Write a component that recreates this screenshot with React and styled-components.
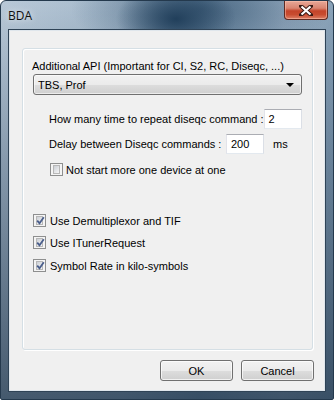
import React from "react";
import styled, { createGlobalStyle } from "styled-components";

const GlobalStyle = createGlobalStyle`
  html, body {
    margin: 0;
    padding: 0;
    background: #ffffff;
  }
  body {
    font-family: "Liberation Sans", Arial, sans-serif;
    font-size: 11px;
    color: #000;
  }
`;

const Window = styled.div`
  width: 334px;
  height: 400px;
  box-sizing: border-box;
  display: flex;
  flex-direction: column;
  padding: 0 7px 7px 7px;
  border: 1px solid #24394d;
  border-radius: 6px 6px 2px 2px;
  background:
    radial-gradient(ellipse 60px 36px at 175px 18px, rgba(30, 60, 88, 0.95), rgba(30, 60, 88, 0) 100%),
    radial-gradient(ellipse 130px 50px at 200px 8px, rgba(56, 86, 114, 0.75), rgba(56, 86, 114, 0) 100%),
    linear-gradient(to bottom, rgba(40, 66, 92, 0) 0%, rgba(40, 66, 92, 0.35) 40%, rgba(30, 52, 74, 0.75) 100%),
    linear-gradient(to right, #b9c9d8 0%, #a6bacc 35%, #7f9bb3 60%, #9db2c6 85%, #8aa3b9 100%);
  overflow: hidden;
`;

const TitleBar = styled.div`
  height: 28px;
  display: flex;
  align-items: flex-start;
  justify-content: space-between;
`;

const Title = styled.span`
  font-family: "Open Sans", "Noto Sans", sans-serif;
  font-size: 12px;
  color: #101010;
  margin-top: 6px;
  text-shadow: 0 0 6px rgba(255, 255, 255, 0.9);
`;

const CloseButton = styled.div`
  width: 44px;
  height: 19px;
  margin-right: -2px;
  box-sizing: border-box;
  border: 1px solid #5e2a22;
  border-top: none;
  border-radius: 0 0 4px 4px;
  background: linear-gradient(#e8a898 0%, #d98470 40%, #c4442a 55%, #c84c30 75%, #dd8067 100%);
  box-shadow: inset 0 0 0 1px rgba(255, 200, 180, 0.5);
  display: flex;
  align-items: center;
  justify-content: center;
`;

const ClientArea = styled.div`
  flex: 1;
  display: flex;
  flex-direction: column;
  background: #f0f0f0;
  border: 1px solid #2f4356;
  box-shadow: inset 0 0 0 1px #dfe6ec;
  padding: 18px 12px 9px 13px;
`;

const GroupBox = styled.div`
  height: 302px;
  box-sizing: border-box;
  border: 1px solid #d5dfe5;
  border-radius: 3px;
  box-shadow: inset 1px 1px 0 #ffffff, 1px 1px 0 #ffffff;
  padding: 11px 10px 0 10px;
  display: flex;
  flex-direction: column;
`;

const Label = styled.div`
  line-height: 13px;
  white-space: nowrap;
  margin-left: -1px;
`;

const Combo = styled.div`
  margin-top: 1px;
  height: 21px;
  box-sizing: border-box;
  border: 1px solid #707070;
  border-radius: 3px;
  background: linear-gradient(#f2f2f2 0%, #ebebeb 50%, #dddddd 51%, #cfcfcf 100%);
  box-shadow: inset 0 0 0 1px rgba(255, 255, 255, 0.6);
  display: flex;
  align-items: center;
  justify-content: space-between;
  padding: 0 7px 0 4px;
`;

const Arrow = styled.span`
  width: 0;
  height: 0;
  border-left: 4px solid transparent;
  border-right: 4px solid transparent;
  border-top: 4px solid #000;
`;

const FieldRow = styled.div`
  display: flex;
  align-items: center;
  padding-left: 16px;
  margin-top: ${(p) => p.$gap}px;
`;

const FieldLabel = styled.span`
  width: ${(p) => p.$w}px;
  white-space: nowrap;
`;

const TextBox = styled.div`
  width: ${(p) => p.$w}px;
  height: 20px;
  box-sizing: border-box;
  background: #fff;
  border: 1px solid #abadb3;
  border-bottom-color: #e3e9ef;
  border-left-color: #e2e3ea;
  border-right-color: #dbdfe6;
  padding: 0 4px;
  display: flex;
  align-items: center;
`;

const Unit = styled.span`
  margin-left: 9px;
`;

const CheckRow = styled.div`
  display: flex;
  align-items: center;
  gap: ${(p) => (p.$indent ? 3 : 4)}px;
  padding-left: ${(p) => (p.$indent ? 17 : 0)}px;
  margin-top: ${(p) => p.$gap}px;
  height: 13px;
  white-space: nowrap;
`;

const Box = styled.span`
  width: 13px;
  height: 13px;
  box-sizing: border-box;
  border: 1px solid #8e8f8f;
  background: #f4f4f4;
  display: flex;
  align-items: center;
  justify-content: center;
  padding: 2px;
  flex-shrink: 0;
`;

const BoxInner = styled.span`
  width: 7px;
  height: 7px;
  border: 1px solid #b7b7b7;
  background: linear-gradient(135deg, #cbcfd5, #f6f6f6);
  display: flex;
  align-items: center;
  justify-content: center;
  position: relative;
`;

const ButtonBar = styled.div`
  display: flex;
  justify-content: flex-end;
  gap: 8px;
  margin-top: 10px;
  margin-right: -1px;
`;

const Button = styled.div`
  width: 73px;
  height: 21px;
  box-sizing: border-box;
  border: 1px solid #707070;
  border-radius: 3px;
  background: linear-gradient(#f2f2f2 0%, #ebebeb 50%, #dddddd 51%, #cfcfcf 100%);
  box-shadow: inset 0 0 0 1px rgba(255, 255, 255, 0.7);
  display: flex;
  align-items: center;
  justify-content: center;
`;

const Check = () => (
  <svg width="9" height="9" viewBox="0 0 9 9" style={{ position: "absolute", left: -1, top: -1 }}>
    <path d="M1.2 4.6 L3.5 7.2 L7.8 1.2" fill="none" stroke="#4b5f8c" strokeWidth="1.8" />
  </svg>
);

const CheckBox = ({ checked, label, indent, gap }) => (
  <CheckRow $indent={indent} $gap={gap}>
    <Box>
      <BoxInner>{checked && <Check />}</BoxInner>
    </Box>
    <span>{label}</span>
  </CheckRow>
);

export default function App() {
  return (
    <>
      <GlobalStyle />
      <Window>
        <TitleBar>
          <Title>BDA</Title>
          <CloseButton>
            <svg width="14" height="11" viewBox="0 0 14 11">
              <path d="M2 1 L12 10 M12 1 L2 10" stroke="#3a1a14" strokeWidth="4" strokeLinecap="square" />
              <path d="M2.5 1.5 L11.5 9.5 M11.5 1.5 L2.5 9.5" stroke="#ffffff" strokeWidth="2.2" />
            </svg>
          </CloseButton>
        </TitleBar>
        <ClientArea>
          <GroupBox>
            <Label>Additional API (Important for CI, S2, RC, Diseqc, ...)</Label>
            <Combo>
              <span>TBS, Prof</span>
              <Arrow />
            </Combo>
            <FieldRow $gap={14}>
              <FieldLabel $w={215}>How many time to repeat diseqc command :</FieldLabel>
              <TextBox $w={40}>2</TextBox>
            </FieldRow>
            <FieldRow $gap={5}>
              <FieldLabel $w={177}>Delay between Diseqc commands :</FieldLabel>
              <TextBox $w={38}>200</TextBox>
              <Unit>ms</Unit>
            </FieldRow>
            <CheckBox indent gap={9} label="Not start more one device at one" />
            <CheckBox checked gap={38} label="Use Demultiplexor and TIF" />
            <CheckBox checked gap={9} label="Use ITunerRequest" />
            <CheckBox checked gap={10} label="Symbol Rate in kilo-symbols" />
          </GroupBox>
          <ButtonBar>
            <Button>OK</Button>
            <Button>Cancel</Button>
          </ButtonBar>
        </ClientArea>
      </Window>
    </>
  );
}
